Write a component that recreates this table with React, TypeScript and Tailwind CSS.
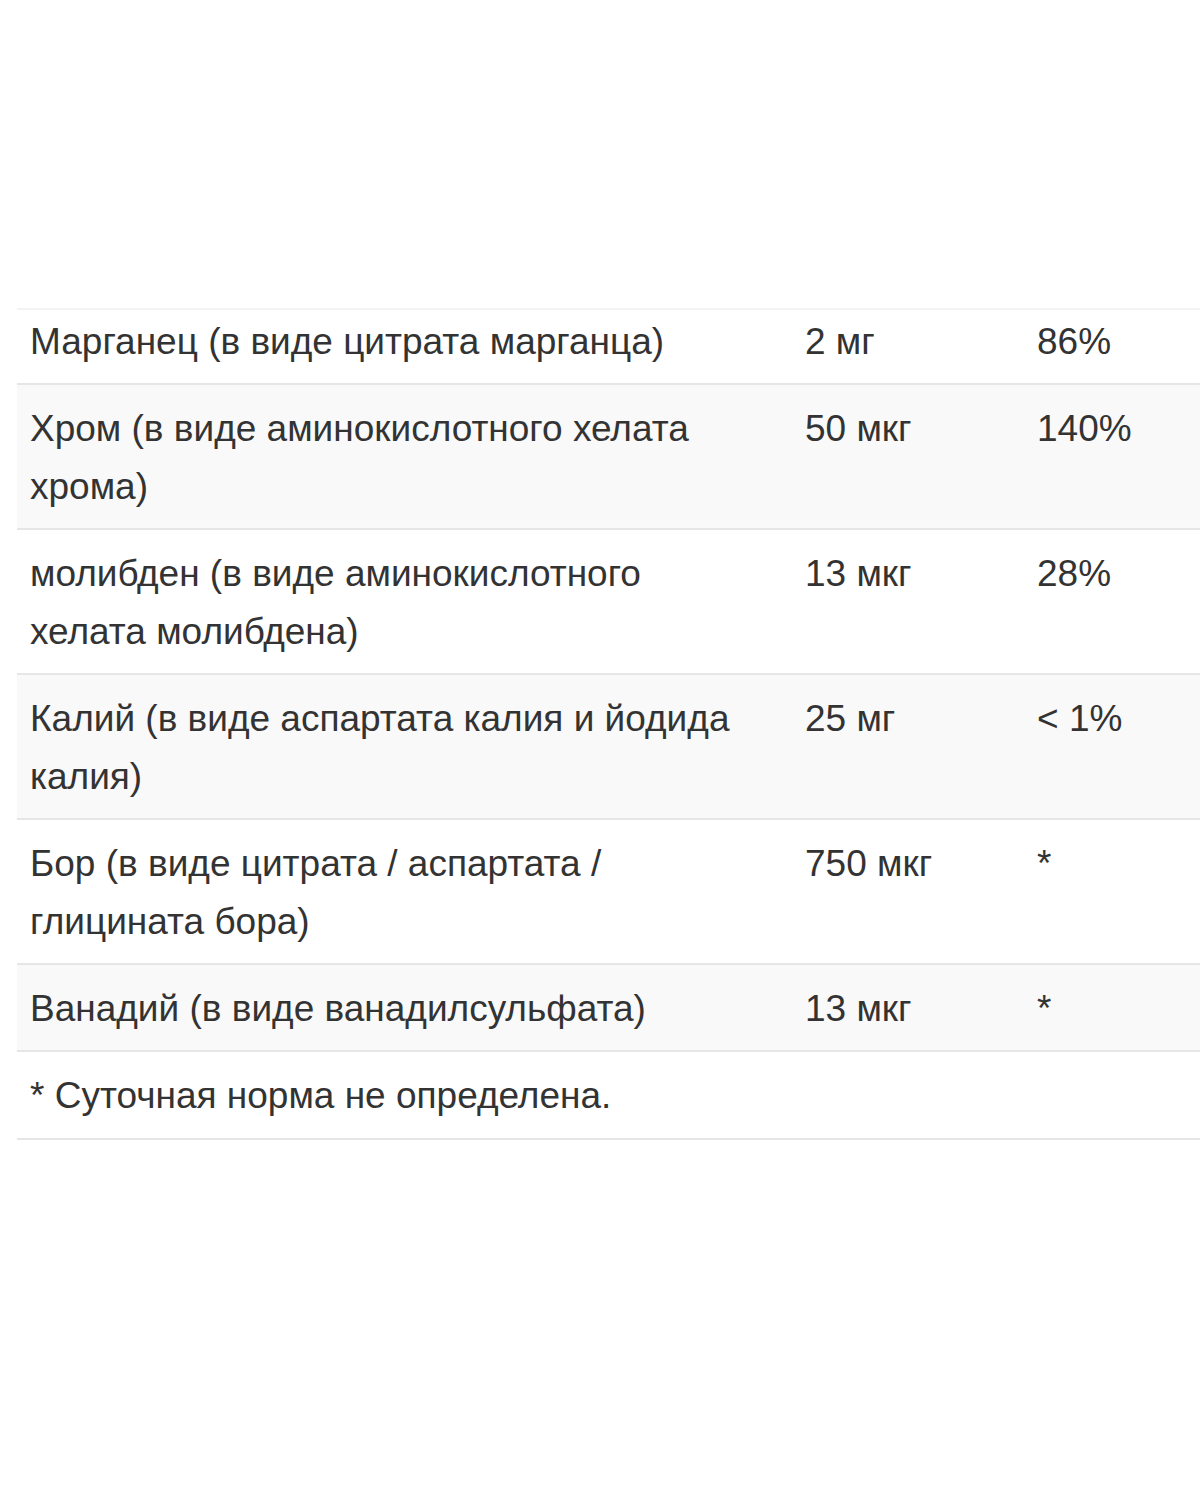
import React from "react";

type Row = { name: string; amount: string; dv: string };

const rows: Row[] = [
  { name: "Марганец (в виде цитрата марганца)", amount: "2 мг", dv: "86%" },
  { name: "Хром (в виде аминокислотного хелата хрома)", amount: "50 мкг", dv: "140%" },
  { name: "молибден (в виде аминокислотного хелата молибдена)", amount: "13 мкг", dv: "28%" },
  { name: "Калий (в виде аспартата калия и йодида калия)", amount: "25 мг", dv: "< 1%" },
  { name: "Бор (в виде цитрата / аспартата / глицината бора)", amount: "750 мкг", dv: "*" },
  { name: "Ванадий (в виде ванадилсульфата)", amount: "13 мкг", dv: "*" },
];

export default function App() {
  return (
    <div
      className="w-[1200px] h-[1500px] bg-white text-[#333333] overflow-hidden"
      style={{ fontFamily: '"Liberation Sans", Arial, sans-serif' }}
    >
      <div className="h-[308px]" />
      <div className="ml-[17px] border-t-2 border-[#f3f3f3]">
        {rows.map((r, i) => (
          <div
            key={i}
            className={`grid grid-cols-[775px_232px_1fr] border-b-2 border-[#e6e6e6] text-[37px] leading-[58px] ${
              i % 2 === 1 ? "bg-[#f9f9f9]" : "bg-white"
            } ${i === 0 ? "pt-[3px] pb-[12px]" : "pt-[15px] pb-[12px]"}`}
          >
            <div className="pl-[13px] pr-[40px]">{r.name}</div>
            <div className="pl-[13px]">{r.amount}</div>
            <div className="pl-[13px]">{r.dv}</div>
          </div>
        ))}
        <div className="border-b-2 border-[#e6e6e6] pl-[13px] pt-[15px] pb-[13px] text-[37px] leading-[58px]">
          * Суточная норма не определена.
        </div>
      </div>
    </div>
  );
}
